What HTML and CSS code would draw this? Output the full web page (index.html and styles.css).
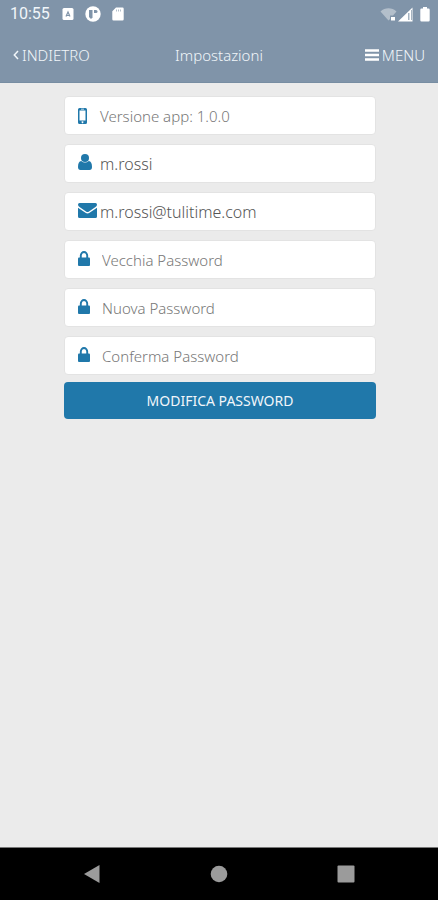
FILE: index.html
```html
<!DOCTYPE html>
<html lang="it">
<head>
<meta charset="utf-8">
<meta name="viewport" content="width=device-width, initial-scale=1">
<title>Impostazioni</title>
<link rel="stylesheet" href="styles.css">
</head>
<body>
<header class="header">
  <div class="status">
    <span class="clock">10:55</span>
    <div class="notices">
      <svg width="12" height="14" viewBox="0 0 12 14" aria-hidden="true"><rect x=".5" y="1" width="11" height="12" rx="1.5" fill="#fff"/><path d="M4 9.5 6 5l2 4.500M4.500 8.500h3" fill="none" stroke="#8094a9" stroke-width="1.2"/></svg>
      <svg width="16" height="16" viewBox="0 0 16 16" aria-hidden="true"><circle cx="8" cy="8" r="7.7" fill="#fff"/><path d="M4 4h3.500v7.500L6 13l-2-2z" fill="#8094a9"/><path d="M9 4h2q1.500 0 1.500 1.500T11 7H9z" fill="#8094a9"/></svg>
      <svg width="12" height="14" viewBox="0 0 12 14" aria-hidden="true"><path d="M4 .5h6.500a1.200 1.200 0 0 1 1.200 1.200v10.600a1.200 1.200 0 0 1-1.200 1.200h-9A1.200 1.200 0 0 1 .3 12.300V4.200z" fill="#fff"/><path d="M4.500 2.500v2M6.500 2.500v2M8.500 2.500v2" stroke="#b3bfcb"/></svg>
    </div>
    <div class="signals">
      <svg width="17" height="15" viewBox="0 0 17 15" aria-hidden="true"><path d="M.5 4.500C5 .1 12 .1 16.500 4.500L13 8.500H10V12L8.500 13.500z" fill="#b3bfcb"/><path d="M11 10h4v3.500h-4z" fill="#fff"/></svg>
      <svg width="15" height="15" viewBox="0 0 15 15" aria-hidden="true"><path d="M14.500.5v14H0z" fill="#fff"/><path d="M10 6h1.500v7H10zM13 3h1v10h-1z" fill="#a5b3c1"/></svg>
      <svg class="battery" width="10" height="15" viewBox="0 0 10 15" aria-hidden="true"><path d="M3 0h4v1.500h1.500q1.200 0 1.200 1.200v10.600q0 1.200-1.200 1.200h-7Q.3 14.500.3 13.300V2.700q0-1.200 1.200-1.200H3z" fill="#fff"/></svg>
    </div>
  </div>
  <nav class="nav">
    <button class="nav-button" type="button"><svg width="6" height="10" viewBox="0 0 6 10" aria-hidden="true"><path d="M5 1 1.300 5 5 9" fill="none" stroke="#f1f6fa" stroke-width="1.500"/></svg>INDIETRO</button>
    <h1 class="title">Impostazioni</h1>
    <button class="nav-button menu" type="button"><svg width="14" height="12" viewBox="0 0 14 12" aria-hidden="true"><path d="M0 1.500h14M0 6h14M0 10.500h14" stroke="#fff" stroke-width="2.400"/></svg>MENU</button>
  </nav>
</header>
<main class="content">
  <form class="form">
    <div class="fields">
      <div class="field">
        <span class="icon"><svg width="9" height="16" viewBox="0 0 9 16" aria-hidden="true"><path fill="#2078aa" fill-rule="evenodd" d="M1.500 0h6Q9 0 9 1.500v13Q9 16 7.500 16h-6Q0 16 0 14.500v-13Q0 0 1.500 0zM1.500 2.500v10h6v-10zM3 .8v.7h3V.8zM4.500 13.300a.9.9 0 1 0 .01 0z"/></svg></span>
        <span class="value version">Versione app: 1.0.0</span>
      </div>
      <div class="field account">
        <label class="icon" for="user"><svg width="14" height="16" viewBox="0 0 14 16" aria-hidden="true"><g fill="#2078aa"><circle cx="7" cy="4" r="4"/><path d="M3.200 7Q7 10 10.800 7 14 7.500 14 13q0 3-2.500 3h-9Q0 16 0 13 0 7.500 3.200 7z"/></g></svg></label>
        <input class="value" id="user" type="text" value="m.rossi" aria-label="Utente" readonly>
      </div>
      <div class="field account">
        <label class="icon" for="email"><svg width="19" height="15" viewBox="0 0 19 15" aria-hidden="true"><g fill="#2078aa"><path d="M1.500 0h16Q19 0 19 1.500 19 3 17.500 4.100L11 8.600q-1.500 1-3 0L1.500 4.100Q0 3 0 1.500 0 0 1.500 0z"/><path d="M0 4.700 7.500 9.800q2 1.300 4 0L19 4.700v8.800q0 1.500-1.500 1.500h-16Q0 15 0 13.500z"/></g></svg></label>
        <input class="value" id="email" type="email" value="m.rossi@tulitime.com" aria-label="Email" readonly>
      </div>
      <div class="field password">
        <label class="icon" for="old"><svg width="12" height="15" viewBox="0 0 12 15" aria-hidden="true"><rect y="6.500" width="12" height="8.500" rx="1" fill="#2078aa"/><path d="M2.800 7V4.500a3.200 3.500 0 0 1 6.400 0V7" fill="none" stroke="#2078aa" stroke-width="1.900"/></svg></label>
        <input class="value" id="old" type="password" placeholder="Vecchia Password" aria-label="Vecchia Password">
      </div>
      <div class="field password">
        <label class="icon" for="new"><svg width="12" height="15" viewBox="0 0 12 15" aria-hidden="true"><rect y="6.500" width="12" height="8.500" rx="1" fill="#2078aa"/><path d="M2.800 7V4.500a3.200 3.500 0 0 1 6.400 0V7" fill="none" stroke="#2078aa" stroke-width="1.900"/></svg></label>
        <input class="value" id="new" type="password" placeholder="Nuova Password" aria-label="Nuova Password">
      </div>
      <div class="field password">
        <label class="icon" for="confirm"><svg width="12" height="15" viewBox="0 0 12 15" aria-hidden="true"><rect y="6.500" width="12" height="8.500" rx="1" fill="#2078aa"/><path d="M2.800 7V4.500a3.200 3.500 0 0 1 6.400 0V7" fill="none" stroke="#2078aa" stroke-width="1.900"/></svg></label>
        <input class="value" id="confirm" type="password" placeholder="Conferma Password" aria-label="Conferma Password">
      </div>
    </div>
    <button class="submit" type="submit">MODIFICA PASSWORD</button>
  </form>
</main>
<footer class="system-bar">
  <button class="key" type="button" aria-label="Indietro"><svg width="18" height="18" viewBox="0 0 18 18"><path d="M16.500 0v18L1 9z" fill="#9b9b9b"/></svg></button>
  <button class="key" type="button" aria-label="Home"><svg width="18" height="18" viewBox="0 0 18 18"><circle cx="9" cy="9" r="8.300" fill="#9b9b9b"/></svg></button>
  <button class="key" type="button" aria-label="App recenti"><svg width="18" height="18" viewBox="0 0 18 18"><rect x=".5" y=".5" width="17" height="17" rx="1" fill="#9b9b9b"/></svg></button>
</footer>
</body>
</html>
```
FILE: styles.css
```css
* {
  box-sizing: border-box;
}

body {
  display: flex;
  flex-direction: column;
  min-height: 100vh;
  margin: 0;
  background: #ebebeb;
  font-family: "Noto Sans", "Open Sans", sans-serif;
  font-size: 15px;
  font-weight: 300;
  line-height: 20px;
}

button {
  border: 0;
  padding: 0;
  background: none;
  font: inherit;
}

svg {
  display: block;
}

.header {
  background: #8094a9;
  color: #f1f6fa;
  border-bottom: 1px solid #778da2;
}

.status {
  display: flex;
  align-items: center;
  height: 28px;
  padding: 0 8px 0 10px;
}

.clock {
  font-family: Roboto, sans-serif;
  font-size: 16px;
  font-weight: 400;
}

.notices {
  display: flex;
  align-items: center;
  gap: 11px;
  margin-left: 12px;
}

.signals {
  display: flex;
  align-items: center;
  gap: 1px;
  margin-left: auto;
}

.battery {
  margin-left: 6px;
}

.nav {
  display: grid;
  grid-template-columns: 1fr auto 1fr;
  align-items: center;
  height: 54px;
  padding: 0 13px;
}

.nav-button {
  display: flex;
  align-items: center;
  justify-self: start;
  gap: 3px;
  color: inherit;
}

.menu {
  justify-self: end;
}

.title {
  margin: 0;
  font-size: 15px;
  font-weight: 300;
}

.content {
  flex: 1;
  padding: 13px 62px 13px 64px;
}

.form {
  display: flex;
  flex-direction: column;
  gap: 7px;
}

.fields {
  display: flex;
  flex-direction: column;
  gap: 9px;
}

.field {
  display: flex;
  align-items: center;
  gap: 3px;
  height: 39px;
  padding: 0 13px;
  border: 1px solid #e3e3e3;
  border-radius: 4px;
  background: #fff;
}

.account {
  font-size: 16px;
}

.password {
  gap: 5px;
}

.icon {
  flex: none;
  width: 19px;
}

.account .icon,
.password .icon {
  padding-bottom: 3px;
}

.value {
  flex: 1;
  min-width: 0;
  padding: 0;
  border: 0;
  outline: 0;
  background: none;
  color: #555;
  font: inherit;
}

.version {
  color: #777;
}

.value::placeholder {
  color: #777;
  opacity: 1;
}

.submit {
  height: 37px;
  border-radius: 4px;
  background: #2078aa;
  color: #f1f6fa;
  font-size: 14px;
  font-weight: 400;
}

.system-bar {
  display: flex;
  align-items: center;
  justify-content: space-between;
  height: 53px;
  padding: 0 83px;
  border-top: 1px solid #777;
  background: #000;
}
```
